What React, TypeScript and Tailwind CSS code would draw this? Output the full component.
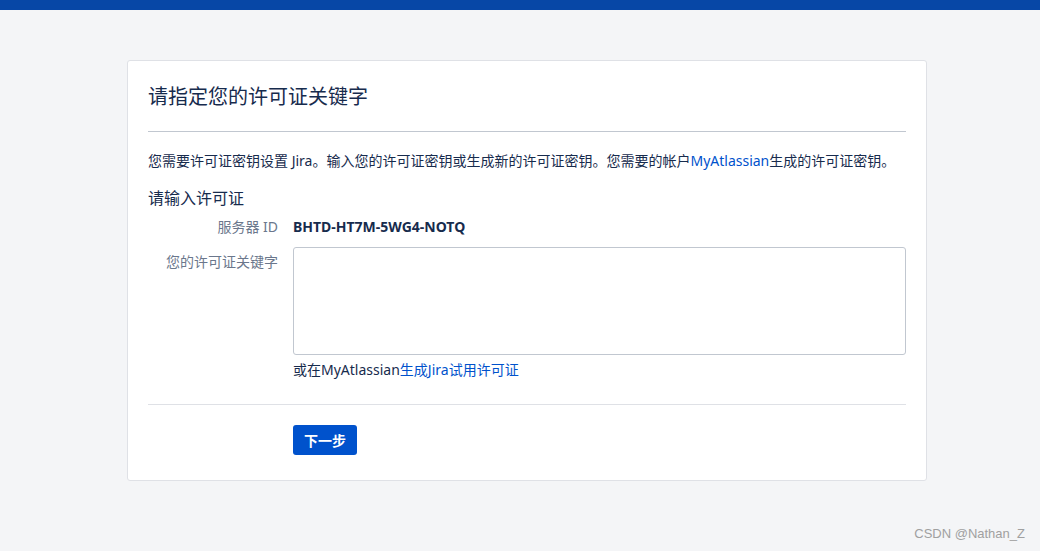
import React from "react";

const font = { fontFamily: '"Segoe UI", "Noto Sans", "Noto Sans CJK SC", sans-serif' };

export default function App() {
  return (
    <div className="relative min-h-[551px] w-full bg-[#f4f5f7]" style={font}>
      <div className="h-[10px] w-full bg-[#0747a6]" />
      <div className="flex justify-center pl-[14px] pt-[50px]">
        <div className="w-[800px] rounded-[3px] border border-[#dfe1e6] bg-white px-[20px] pb-[25px] pt-[22px]">
          <h1 className="text-[20px] leading-[28px] font-normal text-[#172b4d]">请指定您的许可证关键字</h1>
          <div className="mt-[20px] h-px bg-[#c1c7d0]" />
          <p className="mt-[19px] text-[14px] leading-[20px] text-[#172b4d]">
            您需要许可证密钥设置 Jira。输入您的许可证密钥或生成新的许可证密钥。您需要的帐户
            <span className="text-[#0052cc]">MyAtlassian</span>生成的许可证密钥。
          </p>
          <h2 className="mt-[15px] text-[16px] leading-[24px] font-normal text-[#172b4d]">请输入许可证</h2>
          <div className="mt-[7px] flex items-center">
            <div className="w-[130px] text-right text-[14px] leading-[20px] text-[#6b778c]">服务器 ID</div>
            <div className="ml-[15px] text-[14px] leading-[20px] font-bold text-[#172b4d]">BHTD-HT7M-5WG4-NOTQ</div>
          </div>
          <div className="mt-[10px] flex">
            <div className="w-[130px] pt-[5px] text-right text-[14px] leading-[20px] text-[#6b778c]">您的许可证关键字</div>
            <div className="ml-[15px] flex-1">
              <textarea className="block h-[108px] w-full resize-none rounded-[3px] border border-[#c1c7d0] bg-white outline-none" />
              <div className="mt-[5px] text-[14px] leading-[20px] text-[#172b4d]">
                或在MyAtlassian<span className="text-[#0052cc]">生成Jira试用许可证</span>
              </div>
            </div>
          </div>
          <div className="mt-[24px] h-px bg-[#dfe1e6]" />
          <div className="mt-[20px] pl-[145px]">
            <button className="h-[30px] w-[64px] rounded-[3px] bg-[#0052cc] text-[14px] font-bold text-white">下一步</button>
          </div>
        </div>
      </div>
      <div className="absolute bottom-[8px] right-[15px] text-[13px] text-[#a0a0a0]" style={{ fontFamily: '"Liberation Sans", Arial, sans-serif' }}>
        CSDN @Nathan_Z
      </div>
    </div>
  );
}
